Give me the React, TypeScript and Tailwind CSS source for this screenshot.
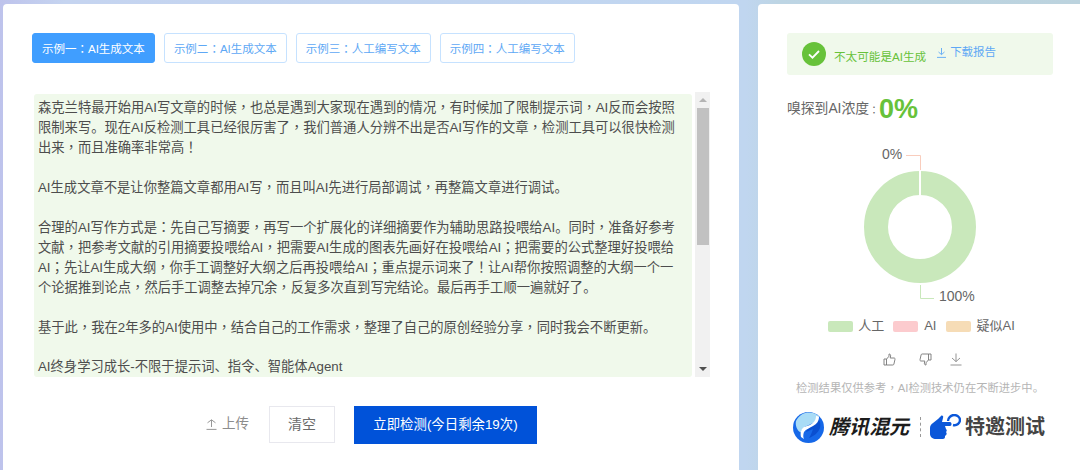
import React from "react";

const font = { fontFamily: '"Liberation Sans", "Noto Sans CJK SC", sans-serif' };

/* Commas, colons and similar marks sit centred in the reference; the TC face draws them that way. */
function T({ text }: { text: string }) {
  return (
    <>
      {text.split(/([，：；！])/).map((part, i) =>
        i % 2 === 1 ? (
          <span key={i} className="font-['Noto_Sans_CJK_TC']">
            {part}
          </span>
        ) : (
          <span key={i}>{part}</span>
        )
      )}
    </>
  );
}

function Tab({ text, active }: { text: string; active?: boolean }) {
  return (
    <div
      className={
        active
          ? "h-[30px] whitespace-nowrap rounded-[3px] border border-[#409eff] bg-[#409eff] px-[9px] text-[11.5px] leading-[28px] text-white"
          : "h-[30px] whitespace-nowrap rounded-[3px] border border-[#c6e2ff] bg-white px-[9px] text-[11.5px] leading-[28px] text-[#5ea8f5]"
      }
    >
      <T text={text} />
    </div>
  );
}

const lines = [
  "森克兰特最开始用AI写文章的时候，也总是遇到大家现在遇到的情况，有时候加了限制提示词，AI反而会按照",
  "限制来写。现在AI反检测工具已经很厉害了，我们普通人分辨不出是否AI写作的文章，检测工具可以很快检测",
  "出来，而且准确率非常高！",
  "",
  "AI生成文章不是让你整篇文章都用AI写，而且叫AI先进行局部调试，再整篇文章进行调试。",
  "",
  "合理的AI写作方式是：先自己写摘要，再写一个扩展化的详细摘要作为辅助思路投喂给AI。同时，准备好参考",
  "文献，把参考文献的引用摘要投喂给AI，把需要AI生成的图表先画好在投喂给AI；把需要的公式整理好投喂给",
  "AI；先让AI生成大纲，你手工调整好大纲之后再投喂给AI；重点提示词来了！让AI帮你按照调整的大纲一个一",
  "个论据推到论点，然后手工调整去掉冗余，反复多次直到写完结论。最后再手工顺一遍就好了。",
  "",
  "基于此，我在2年多的AI使用中，结合自己的工作需求，整理了自己的原创经验分享，同时我会不断更新。",
  "",
  "AI终身学习成长-不限于提示词、指令、智能体Agent",
];

function Donut() {
  return (
    <svg width="140" height="170" viewBox="0 0 140 170" className="block">
      <circle cx="70" cy="82" r="44" fill="none" stroke="#c9e8bb" strokeWidth="24" />
      <line x1="70" y1="25" x2="70" y2="51" stroke="#fff" strokeWidth="2" />
      <path d="M56 10.5H70.5V25" fill="none" stroke="#f9cdbd" strokeWidth="1" />
      <path d="M70.5 140V153.5H84" fill="none" stroke="#c9e8bb" strokeWidth="1" />
    </svg>
  );
}

function Thumb({ down }: { down?: boolean }) {
  return (
    <svg width="13" height="13" viewBox="0 0 13 13" fill="none" stroke="#777" strokeWidth="0.9" className={down ? "rotate-180" : ""}>
      <path d="M1 6h2.5v6H1zM3.5 6.2 6 3.2V1c1.2 0 1.8.8 1.6 2L7.2 5H11c.8 0 1.2.6 1 1.3l-1.1 4.8c-.1.6-.5.9-1.1.9H3.5" />
    </svg>
  );
}

export default function App() {
  return (
    <div
      style={font}
      className="flex h-[470px] w-[1080px] gap-[19px] overflow-hidden bg-[linear-gradient(90deg,#bec3ec_0%,#c5d4f0_6%,#c0d6f0_69%,#bdd5e4_72%,#bcd3de_100%)] pl-[3px] pt-[4px]"
    >
      <main className="flex h-[480px] w-[736px] shrink-0 flex-col rounded-[4px] bg-white pl-[29px] pt-[29px]">
        <div className="flex gap-[9px]">
          <Tab active text="示例一：AI生成文本" />
          <Tab text="示例二：AI生成文本" />
          <Tab text="示例三：人工编写文本" />
          <Tab text="示例四：人工编写文本" />
        </div>

        <div className="mt-[29px] flex h-[285px] w-[678px] items-end gap-[3px] pl-[2px]">
          <div className="h-[283px] w-[658px] overflow-hidden rounded-[3px] bg-[#f0f9eb] pl-[4px] pt-[3px] text-[13.3px] leading-[20px] text-[#4d4d4d]">
            {lines.map((l, i) => (
              <div key={i} className="h-[20px] whitespace-nowrap">
                <T text={l} />
              </div>
            ))}
          </div>
          <div className="flex h-[285px] w-[15px] flex-col items-center bg-[#f1f1f1]">
            <div className="mt-[6px] h-0 w-0 border-x-[4px] border-b-[4px] border-x-transparent border-b-[#b4b4b4]" />
            <div className="mt-[6px] h-[137px] w-[12px] bg-[#c1c1c1]" />
            <div className="mb-[6px] mt-auto h-0 w-0 border-x-[4px] border-t-[4px] border-x-transparent border-t-[#505050]" />
          </div>
        </div>

        <div className="mt-[29px] flex items-start">
          <div className="ml-[174px] flex h-[37px] items-center gap-[5px] text-[13.5px] text-[#8c8c8c]">
            <svg width="11" height="11" viewBox="0 0 11 11" fill="none" stroke="#8c8c8c" strokeWidth="0.9">
              <path d="M1.5 3.8 5.5.8l4 3M5.5 1v7M0.5 10.4h10" />
            </svg>
            上传
          </div>
          <div className="ml-[20px] flex h-[37px] w-[66px] items-center justify-center border border-[#e8e8ee] bg-white text-[14px] text-[#6b6b6b]">
            清空
          </div>
          <div className="ml-[19px] flex h-[38px] w-[183px] items-center justify-center bg-[#0052d9] text-[13.4px] text-white">
            立即检测(今日剩余19次)
          </div>
        </div>
      </main>

      <aside className="flex h-[480px] w-[322px] shrink-0 flex-col rounded-tl-[4px] bg-white pl-[29px] pt-[29px]">
        <div className="flex h-[42px] w-[266px] items-center rounded-[3px] bg-[#f0f9eb] pl-[15px]">
          <svg width="24" height="24" viewBox="0 0 24 24">
            <circle cx="12" cy="12" r="12" fill="#67c23a" />
            <path d="M7 12.3l3.5 3.4L17 9" fill="none" stroke="#fff" strokeWidth="1.8" />
          </svg>
          <span className="ml-[8px] mt-[6px] text-[11.6px] text-[#67c23a]">不太可能是AI生成</span>
          <svg className="mb-[3px] ml-[11px]" width="9" height="10" viewBox="0 0 9 10" fill="none" stroke="#5ea8f5" strokeWidth="0.9">
            <path d="M4.5 0v6.5M1.5 4l3 2.6 3-2.6M0 9.4h9" />
          </svg>
          <span className="mb-[3px] ml-[4px] text-[11.5px] text-[#5ea8f5]">下载报告</span>
        </div>

        <div className="mt-[18px] flex h-[32px] items-center text-[13.8px] text-[#666]">
          嗅探到AI浓度
          <span className="font-['Noto_Sans_CJK_TC'] text-[10px]">：</span>
          <span className="text-[27px] font-bold leading-none text-[#67c23a]">0%</span>
        </div>

        <div className="relative mt-[20px] h-[170px] w-[265px]">
          <div className="absolute left-[63px] top-0">
            <Donut />
          </div>
          <span className="absolute left-[95px] top-[-1px] text-[14px] leading-[20px] text-[#666]">0%</span>
          <span className="absolute left-[152px] top-[141px] text-[14px] leading-[20px] text-[#666]">100%</span>
        </div>

        <div className="ml-[2px] mt-[3px] flex h-[16px] w-[265px] items-center justify-center text-[13px] text-[#666]">
          <span className="h-[11px] w-[25px] rounded-[2px] bg-[#c9e8bb]" />
          <span className="ml-[5px]">人工</span>
          <span className="ml-[9px] h-[11px] w-[25px] rounded-[2px] bg-[#fccbce]" />
          <span className="ml-[6px]">AI</span>
          <span className="ml-[9px] h-[11px] w-[25px] rounded-[2px] bg-[#f6dcb6]" />
          <span className="ml-[6px]">疑似AI</span>
        </div>

        <div className="ml-[96px] mt-[19px] flex h-[13px] items-center">
          <Thumb />
          <span className="ml-[23px]">
            <Thumb down />
          </span>
          <svg className="ml-[18px]" width="12" height="13" viewBox="0 0 12 13" fill="none" stroke="#888" strokeWidth="0.9">
            <path d="M6 0.5v8M2 5l4 3.6L10 5M0.5 12h11" />
          </svg>
        </div>

        <div className="mt-[13px] w-[266px] whitespace-nowrap text-center text-[11.3px] leading-[16px] text-[#b5b5b5]">
          <T text="检测结果仅供参考，AI检测技术仍在不断进步中。" />
        </div>

        <div className="ml-[6px] mt-[15px] flex h-[32px] items-center">
          <svg width="31" height="31" viewBox="0 0 31 31">
            <circle cx="15.5" cy="15.5" r="15.5" fill="#1668e8" />
            <path d="M3 9C6 3 11 .5 16 .5c5 0 8 2 10 4-1 5-5 6-9 8-5 2-8 3-9 8C4 19 2 13 3 9z" fill="#a9dcf6" />
            <path d="M17 14c4-2 7-5 7-9 3 3 4 7 3 11-2 5-6 8-11 10 2-3 3-6 4-9-2 1-5 2-7 3 1-2 2-5 4-6z" fill="#0a4fd0" />
            <path d="M17 13c3-2 6-4 6-9 1 0 2 .5 3 1 0 4-2 7-6 9-3 2-7 3-9 6-1 3-1 5 0 7-1-1-2-1-3-2-1-4 0-8 3-10 2-1 4-1 6-2z" fill="#fff" />
          </svg>
          <span className="ml-[5px] text-[20px] font-bold italic leading-none text-[#1c1c1c]">腾讯混元</span>
          <span className="ml-[11px] h-[20px] border-l border-dashed border-[#999]" />
          <svg className="ml-[9px]" width="31" height="27" viewBox="0 0 31 27">
            <path d="M0 14c0-2 1-4 3-5l5-4 3-3c1-1 3 0 2 2l-1 4h8c2 0 2 4 0 4h-5l1 3c1 1 1 2 0 3 1 1 1 3-1 4v1c0 1-1 2-2 2H6c-3 0-6-2-6-5z" fill="#0b57d9" />
            <path d="M18 7c0-3 3-6 6-6s6 2 6 5-3 6-7 5" fill="none" stroke="#0b57d9" strokeWidth="2.4" />
          </svg>
          <span className="ml-[4px] text-[20px] font-bold leading-none text-[#444]">特邀测试</span>
        </div>
      </aside>
    </div>
  );
}
